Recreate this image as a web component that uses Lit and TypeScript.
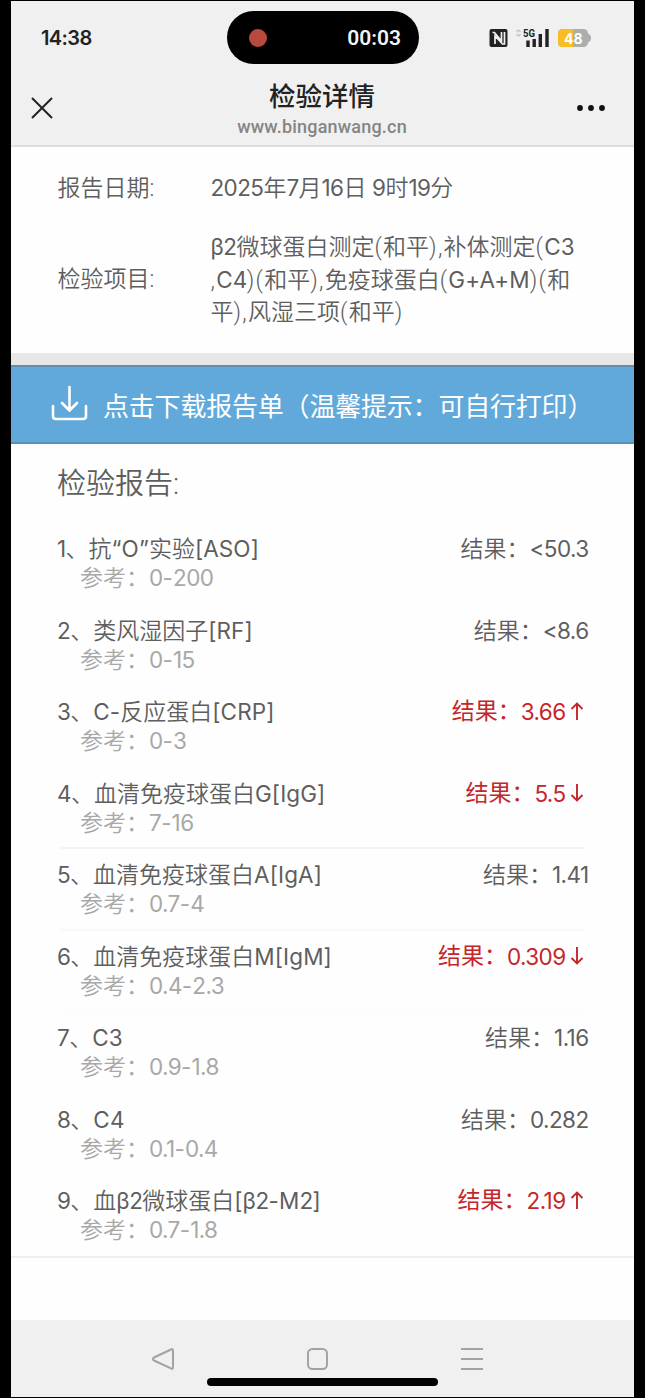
import { LitElement, html, css, svg } from "lit";
import { customElement, property } from "lit/decorators.js";
import { classMap } from "lit/directives/class-map.js";

interface Item {
  name: string;
  range: string;
  value: string;
  flag?: "up" | "down";
  rule?: "clear" | "soft" | "faint";
}

const ITEMS: Item[] = [
  { name: "抗“O”实验[ASO]", range: "0-200", value: "<50.3" },
  { name: "类风湿因子[RF]", range: "0-15", value: "<8.6" },
  { name: "C-反应蛋白[CRP]", range: "0-3", value: "3.66", flag: "up" },
  { name: "血清免疫球蛋白G[IgG]", range: "7-16", value: "5.5", flag: "down", rule: "clear" },
  { name: "血清免疫球蛋白A[IgA]", range: "0.7-4", value: "1.41", rule: "soft" },
  { name: "血清免疫球蛋白M[IgM]", range: "0.4-2.3", value: "0.309", flag: "down", rule: "faint" },
  { name: "C3", range: "0.9-1.8", value: "1.16" },
  { name: "C4", range: "0.1-0.4", value: "0.282" },
  { name: "血β2微球蛋白[β2-M2]", range: "0.7-1.8", value: "2.19", flag: "up" },
];

// Sets digits, Latin letters and half-width brackets in their own spacing beside the Chinese text.
const mixed = (text: string) =>
  text
    .split(/([A-Za-z\[\]“”+\-]+|[0-9.<β]+|[(),]+)/)
    .filter((part) => part !== "")
    .map((part) =>
      /^[A-Za-z\[\]“”+\-]/.test(part)
        ? html`<span class="latin">${part}</span>`
        : /^[0-9.<β]/.test(part)
          ? html`<span class="digits">${part}</span>`
          : /^[(),]/.test(part)
            ? html`<span class="punct">${part}</span>`
            : part
    );

const mixedStyles = css`
  .latin { font-family: Inter, sans-serif; font-size: 22.5px; font-weight: 400; letter-spacing: 0.1px; }
  .digits { font-family: Inter, sans-serif; font-size: 22.5px; font-weight: 400; letter-spacing: -0.6px; }
  .punct { letter-spacing: 1.3px; }
`;

@customElement("report-row")
class ReportRow extends LitElement {
  @property({ attribute: false }) item!: Item;
  @property({ type: Number }) index = 1;

  static styles = [mixedStyles, css`
    :host { display: block; height: 81.5px; box-sizing: border-box; padding: 10px 45.5px 0 46px; }
    .line { display: flex; justify-content: space-between; height: 29px; line-height: 29px; white-space: nowrap; }
    .name, .result { color: #5e5e5e; }
    .ref { height: 30px; line-height: 29px; padding-left: 23px; color: #a8a8a8; white-space: nowrap; }
    .abnormal { color: #c4262c; display: flex; padding-right: 4.5px; font-weight: 400; }
    .arrow { width: 14px; height: 18px; margin: 5px 0 0 4.5px; fill: none; stroke: currentColor; stroke-width: 1.9; }
    .rule { height: 2px; margin: 9.5px 4px 0 4px; }
    .clear { background: #f3f3f3; }
    .soft { background: #f8f8f8; }
    .faint { background: #fcfcfc; }
  `];

  render() {
    const { name, range, value, flag, rule } = this.item;
    return html`
      <div class="line">
        <span class="name">${mixed(`${this.index}、${name}`)}</span>
        <span class=${classMap({ result: !flag, abnormal: !!flag })}>结果：${mixed(value)}${flag
          ? html`<svg class="arrow" viewBox="0 0 14 18">${flag === "up"
              ? svg`<path d="M7 18V1.5M1.5 7L7 1.5L12.5 7" />`
              : svg`<path d="M7 0V16.5M1.5 11L7 16.5L12.5 11" />`}</svg>`
          : ""}</span>
      </div>
      <div class="ref">参考：${mixed(range)}</div>
      ${rule ? html`<div class="rule ${rule}"></div>` : ""}
    `;
  }
}

@customElement("app-root")
class AppRoot extends LitElement {
  static styles = [mixedStyles, css`
    :host {
      display: block; box-sizing: border-box; width: 645px; height: 1398px; overflow: hidden;
      background: #000; padding: 1px 11px 1px 11px;
      font-family: Roboto, "Noto Sans CJK SC", sans-serif; font-size: 23px; font-weight: 350; color: #5e5e5e;
    }
    .screen { height: 1396px; background: #fefefe; display: flex; flex-direction: column; }
    .top { height: 146px; box-sizing: border-box; background: #f0f0f0; border-bottom: 2px solid #dedede; }
    .status { height: 73px; display: grid; grid-template-columns: 215.5px 192.5px 1fr; align-items: center; }
    .clock { padding-left: 30px; font-size: 20px; font-weight: 600; color: #222; font-family: Inter, sans-serif; letter-spacing: -0.6px; }
    .island { height: 53px; border-radius: 27px; background: #000; display: flex; align-items: center; justify-content: space-between; padding: 0 18px 0 22.5px; box-sizing: border-box; }
    .dot { width: 18px; height: 18px; border-radius: 50%; background: #b74a3c; }
    .timer { color: #f4f4f4; font-size: 21px; font-weight: 600; }
    .signals { width: 104px; height: 26px; margin-left: 69.5px; }
    .bar { height: 70px; display: grid; grid-template-columns: 100px 1fr 100px; }
    .close { width: 24px; height: 24px; margin: 22px 0 0 19px; fill: none; stroke: #222; stroke-width: 2; }
    .more { width: 30px; height: 8px; margin: 30px 0 0 42px; justify-self: start; fill: #111; }
    .titles { text-align: center; padding-right: 1px; }
    .title { font-size: 26.5px; line-height: 34px; color: #222; padding-top: 6px; font-weight: 450; }
    .site { font-size: 18px; line-height: 22px; color: #858585; padding-top: 2px; letter-spacing: 0.2px; font-weight: 500; }
    .info { height: 206px; box-sizing: border-box; padding: 24px 0 0 46.5px; }
    .field { display: grid; grid-template-columns: 153px 390px; align-items: center; line-height: 33px; white-space: nowrap; }
    .field span div { height: 33px; }
    .project { padding-top: 25px; }
    .gap { height: 12px; background: #e7e7e6; }
    .download {
      height: 79px; box-sizing: border-box; background: #62a9db; display: flex; align-items: center;
      border-top: 2px solid #628fae; border-bottom: 2px solid #5991b8; color: #fff; font-size: 26px; font-weight: 400; padding-left: 40px;
      white-space: nowrap; letter-spacing: -0.2px;
    }
    .tray { width: 37px; height: 36px; margin: -4px 15px 0 0; fill: none; stroke: #fff; stroke-width: 2.6; stroke-linecap: round; stroke-linejoin: round; }
    .heading { height: 80px; box-sizing: border-box; padding: 19px 0 0 46px; font-size: 29px; line-height: 42px; }
    .report { border-bottom: 2px solid #eeeeee; height: 814px; box-sizing: border-box; }
    .rest { flex: 1; }
    .nav { height: 77px; background: #f0f0f0; position: relative; display: flex; align-items: flex-start; }
    .keys { width: 100%; height: 77px; fill: none; stroke: #a3a3a3; stroke-width: 2; }
    .home { position: absolute; left: 196px; top: 58px; width: 231px; height: 8px; border-radius: 4px; background: #000; }
    .nfc { fill: #222; }
    .wave { fill: none; stroke: #f0f0f0; stroke-width: 1.7; }
    .five { font: 700 10.5px Roboto, sans-serif; fill: #222; }
    .level { font: 700 15px Inter, sans-serif; fill: #fff; }
  `];

  render() {
    return html`
      <div class="screen">
        <header class="top">
          <div class="status">
            <span class="clock">14:38</span>
            <div class="island"><span class="dot"></span><span class="timer">00:03</span></div>
            <svg class="signals" viewBox="0 0 104 26">
              <rect class="nfc" x="0.500" y="4" width="18" height="18" rx="2" />
              <path class="wave" d="M3.500 7.500H5.500L12.500 16V7M6 19V11L13.500 19H15.500V7" />
              <path d="M27.500 7L29.500 5L31.500 7M27.500 9L29.500 11L31.500 9" fill="none" stroke="#c4c4c4" stroke-width="1.5" />
              <text class="five" x="34" y="11.5" textLength="12" lengthAdjust="spacingAndGlyphs">5G</text>
              <path d="M39 15.500V22M45.200 14V22M51.300 9V22M58 4V22" stroke="#222" stroke-width="3.4" fill="none" />
              <rect x="69" y="4" width="30" height="18" rx="4.5" fill="#adadad" />
              <path d="M99 8.500Q102 10 102 13Q102 16 99 17.500Z" fill="#adadad" />
              <path d="M73.500 4H84V22H73.500Q69 22 69 17.500V8.500Q69 4 73.500 4Z" fill="#f8bd24" />
              <text class="level" x="75" y="18.500" textLength="18.500" lengthAdjust="spacingAndGlyphs">48</text>
            </svg>
          </div>
          <div class="bar">
            <svg class="close" viewBox="0 0 24 24"><path d="M2 2L22 22M22 2L2 22" /></svg>
            <div class="titles">
              <div class="title">检验详情</div>
              <div class="site">www.binganwang.cn</div>
            </div>
            <svg class="more" viewBox="0 0 30 8"><circle cx="4" cy="4" r="2.900" /><circle cx="15" cy="4" r="2.900" /><circle cx="26" cy="4" r="2.900" /></svg>
          </div>
        </header>
        <section class="info">
          <div class="field"><span>报告日期:</span><span>${mixed("2025年7月16日 9时19分")}</span></div>
          <div class="field project">
            <span>检验项目:</span>
            <span>
              <div>${mixed("β2微球蛋白测定(和平),补体测定(C3")}</div>
              <div>${mixed(",C4)(和平),免疫球蛋白(G+A+M)(和")}</div>
              <div>${mixed("平),风湿三项(和平)")}</div>
            </span>
          </div>
        </section>
        <div class="gap"></div>
        <div class="download">
          <svg class="tray" viewBox="0 0 37 36"><path d="M18.500 2V25M11 18L18.500 25.500L26 18M2 21V31Q2 34 5 34H32Q35 34 35 31V21" /></svg>
          <span>点击下载报告单（温馨提示：可自行打印）</span>
        </div>
        <section class="report">
          <div class="heading">检验报告:</div>
          ${ITEMS.map((item, i) => html`<report-row .item=${item} .index=${i + 1}></report-row>`)}
        </section>
        <div class="rest"></div>
        <nav class="nav">
          <svg class="keys" viewBox="0 0 623 77">
            <path d="M160 29.500Q162 28.300 162 31V47Q162 49.500 160 48.300L143 40.500Q140.500 39 143 37.500Z" />
            <rect x="297" y="29" width="19" height="20" rx="4.500" />
            <path d="M450 29H472M450 39H472M450 49H472" />
          </svg>
          <div class="home"></div>
        </nav>
      </div>
    `;
  }
}
